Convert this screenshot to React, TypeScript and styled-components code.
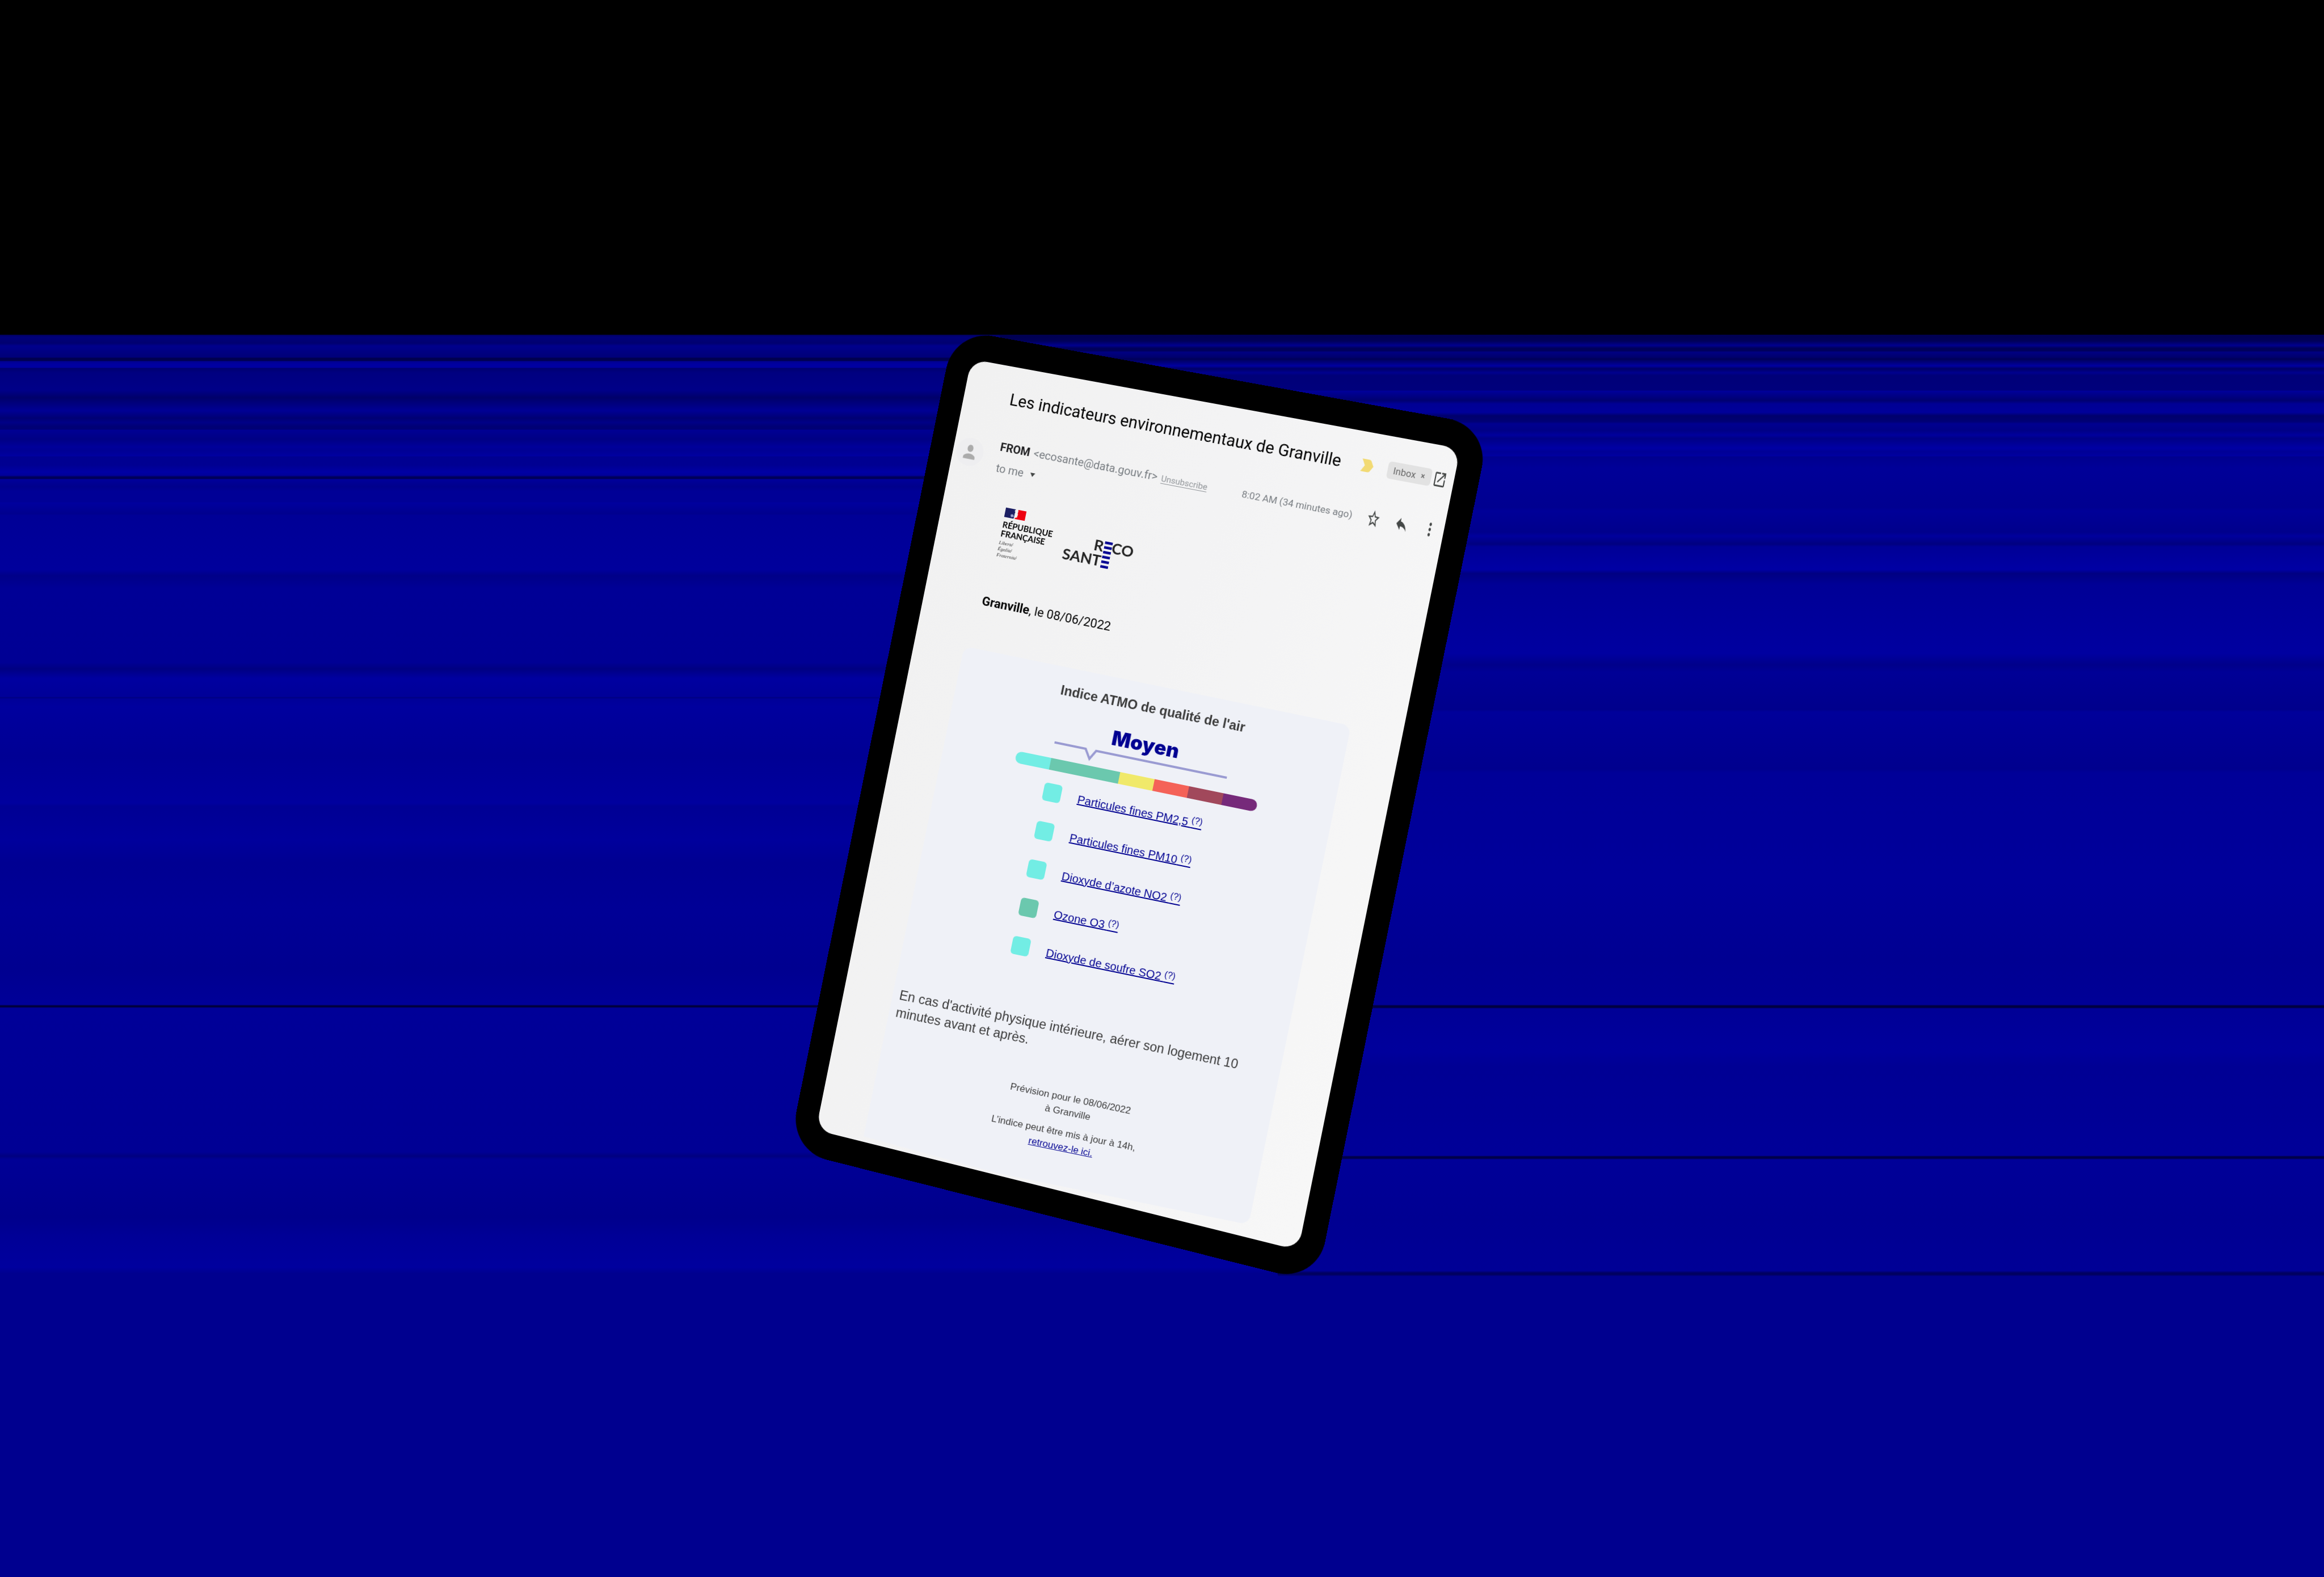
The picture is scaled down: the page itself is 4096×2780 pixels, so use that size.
import React from "react";
import styled, { createGlobalStyle } from "styled-components";

type Point = [number, number];
type Stop = [number, string];

/* Maps a w x h rectangle onto four corners (tl, tr, bl, br) with a perspective matrix. */
const quadTransform = (w: number, h: number, corners: [Point, Point, Point, Point]) => {
  const [[x0, y0], [x1, y1], [x2, y2], [x3, y3]] = corners;
  const dx1 = x1 - x3;
  const dx2 = x2 - x3;
  const dx3 = x0 - x1 + x3 - x2;
  const dy1 = y1 - y3;
  const dy2 = y2 - y3;
  const dy3 = y0 - y1 + y3 - y2;
  const det = dx1 * dy2 - dx2 * dy1;
  const g = (dx3 * dy2 - dx2 * dy3) / det;
  const k = (dx1 * dy3 - dx3 * dy1) / det;
  const m = [
    (x1 - x0 + g * x1) / w, (y1 - y0 + g * y1) / w, 0, g / w,
    (x2 - x0 + k * x2) / h, (y2 - y0 + k * y2) / h, 0, k / h,
    0, 0, 1, 0,
    x0, y0, 0, 1,
  ];
  return `matrix3d(${m.map((n) => n.toFixed(8)).join(",")})`;
};

const BAND = 1660;
const bands = (stops: Stop[]) =>
  `linear-gradient(180deg, ${stops
    .map(([y, c]) => `${c} ${((y / BAND) * 100).toFixed(3)}%`)
    .join(", ")})`;

const leftBands = bands([
  [0, "#000058"], [4, "#00007a"], [15, "#000070"], [20, "#00008c"], [40, "#000078"],
  [41, "#000050"], [46, "#000050"], [47, "#000090"], [52, "#0000a0"], [58, "#0000a0"],
  [59, "#000070"], [67, "#000080"], [98, "#000088"], [111, "#00006a"], [134, "#000094"],
  [147, "#000074"], [155, "#000086"], [162, "#000074"], [167, "#000076"], [168, "#000094"],
  [184, "#000084"], [198, "#00009a"], [204, "#000094"], [214, "#0000a0"], [215, "#000090"],
  [230, "#000092"], [242, "#0000a4"], [248, "#00009a"], [251, "#000058"], [254, "#000058"],
  [255, "#00009a"], [268, "#00008c"], [276, "#000096"], [295, "#000096"], [296, "#00009e"],
  [316, "#00008e"], [318, "#000096"], [414, "#00009c"], [425, "#000088"], [447, "#000096"],
  [578, "#000094"], [589, "#000082"], [600, "#000096"], [606, "#0000a0"], [638, "#000098"],
  [640, "#000080"], [642, "#000098"], [655, "#00009e"], [743, "#000094"], [826, "#00009e"],
  [831, "#000094"], [891, "#00009c"], [930, "#000092"], [1018, "#000096"], [1117, "#000090"],
  [1181, "#000098"], [1183, "#00003a"], [1185, "#00003a"], [1187, "#000098"], [1441, "#000094"],
  [1448, "#000080"], [1454, "#000096"], [1556, "#00008c"], [1589, "#000096"], [1644, "#00009e"],
  [1655, "#00008f"], [1660, "#00008f"],
]);

const rightBands = bands([
  [0, "#000050"], [11, "#000058"], [19, "#00008e"], [24, "#00005a"], [28, "#00005a"],
  [31, "#000082"], [40, "#00006c"], [43, "#000058"], [55, "#0000a0"], [60, "#000066"],
  [67, "#00008e"], [72, "#000078"], [98, "#00007c"], [99, "#00009a"], [116, "#000070"],
  [122, "#000094"], [137, "#00009a"], [143, "#00006c"], [153, "#000074"], [157, "#000090"],
  [169, "#000086"], [177, "#00009c"], [183, "#000086"], [200, "#0000a4"], [206, "#000096"],
  [214, "#0000a0"], [215, "#00008e"], [235, "#000098"], [305, "#000090"], [310, "#000098"],
  [348, "#00008c"], [355, "#00009c"], [369, "#000080"], [374, "#000096"], [414, "#0000a4"],
  [421, "#000082"], [441, "#000096"], [562, "#0000a0"], [582, "#00008a"], [595, "#000096"],
  [661, "#00008c"], [665, "#00009a"], [766, "#00008e"], [772, "#000098"], [964, "#00009a"],
  [1100, "#000092"], [1181, "#000096"], [1183, "#000040"], [1186, "#000040"], [1188, "#000096"],
  [1264, "#00009c"], [1290, "#000094"], [1447, "#000098"], [1449, "#000048"], [1452, "#000048"],
  [1454, "#000098"], [1560, "#000092"], [1650, "#000096"], [1654, "#000060"], [1657, "#000060"],
  [1660, "#00008f"],
]);

const SCREEN_W = 880;
const SCREEN_H = 1404;
const BEZEL_X = 42;
const BEZEL_Y = 47;
const tilt = quadTransform(SCREEN_W, SCREEN_H, [
  [104, 0],
  [966, 158],
  [-170, 1359],
  [680, 1571],
]);

const GlobalStyle = createGlobalStyle`
  * { box-sizing: border-box; }
  body { margin: 0; background: #00008f; }
  h1, h2, p, ul { margin: 0; padding: 0; }
  ul { list-style: none; }
  button { margin: 0; padding: 0; border: 0; background: none; font: inherit; color: inherit; }
`;

const Stage = styled.main`
  display: grid;
  min-height: 100vh;
  overflow: hidden;
  & > * { grid-area: 1 / 1; }
`;

const Backdrop = styled.div`
  display: grid;
  grid-template-rows: 590fr 1660fr 530fr;
  background: #00008f;
`;

const Night = styled.div`
  background: #000;
`;

const Streaks = styled.div`
  position: relative;
  background: ${leftBands};
  &::after {
    content: "";
    position: absolute;
    inset: 0;
    background: ${rightBands};
    clip-path: polygon(43% 0, 100% 0, 100% 100%, 55% 100%);
  }
`;

const Scene = styled.div`
  display: grid;
  justify-items: center;
  align-items: start;
  padding-top: 586px;
  & > * { grid-area: 1 / 1; }
`;

const Tablet = styled.div`
  padding: ${BEZEL_Y}px ${BEZEL_X}px;
  border-radius: 72px;
  background: #000;
  transform-origin: ${BEZEL_X}px ${BEZEL_Y}px;
  transform: ${tilt};
`;

const Screen = styled.div`
  width: ${SCREEN_W}px;
  height: ${SCREEN_H}px;
  padding-top: 40px;
  border-radius: 30px;
  overflow: hidden;
  background: linear-gradient(100deg, #f1f1f1, #f3f3f4 45%, #f7f7f7);
  font-family: Roboto, "Liberation Sans", sans-serif;
`;

const TitleRow = styled.header`
  display: flex;
  align-items: center;
  height: 36px;
  padding: 0 12px 0 84px;
`;

const Title = styled.h1`
  flex: 1;
  font-size: 29px;
  line-height: 36px;
  font-weight: 400;
  color: #000;
  white-space: nowrap;
`;

const Chip = styled.span`
  display: flex;
  align-items: center;
  gap: 9px;
  width: 76px;
  height: 30px;
  margin: 0 3px 0 25px;
  padding-left: 10px;
  border-radius: 6px;
  background: #e2e2e2;
  color: #666;
  font-size: 16px;
`;

const IconButton = styled.button`
  display: flex;
  align-items: center;
  justify-content: center;
  width: 24px;
  height: 36px;
  color: #444746;
`;

const SenderRow = styled.section`
  display: flex;
  align-items: center;
  gap: 28px;
  margin-top: 56px;
  padding: 0 12px 0 6px;
`;

const Avatar = styled.span`
  display: flex;
  align-items: center;
  justify-content: center;
  width: 50px;
  height: 50px;
  border-radius: 50%;
  background: #eeeef0;
`;

const Sender = styled.div`
  display: flex;
  flex-direction: column;
  gap: 12px;
  flex: 1;
  font-size: 20px;
  line-height: 24px;
  color: #777c81;
  white-space: nowrap;
`;

const SenderLine = styled.div`
  display: flex;
  align-items: baseline;
  gap: 7px;
`;

const SenderName = styled.strong`
  color: #1d1d1f;
  font-weight: 700;
`;

const Unsubscribe = styled.a`
  color: #909498;
  font-size: 15px;
  text-decoration: underline;
  text-underline-offset: 3px;
`;

const Recipient = styled.button`
  display: flex;
  align-items: center;
  gap: 12px;
  color: #777c81;
`;

const Actions = styled.div`
  display: flex;
  align-items: center;
  align-self: flex-start;
  gap: 25px;
  height: 28px;
`;

const Time = styled.time`
  color: #777c81;
  font-size: 17px;
  white-space: nowrap;
`;

const Logos = styled.div`
  display: flex;
  gap: 21px;
  margin-top: 54px;
  padding-left: 116px;
`;

const Republic = styled.div`
  display: flex;
  flex-direction: column;
  width: 92px;
`;

const RepublicName = styled.strong`
  margin-top: 5px;
  color: #000;
  font: 700 15px / 16px Lato, sans-serif;
`;

const Motto = styled.em`
  margin-top: 4px;
  color: #333;
  font: italic 400 9px / 11px "Liberation Serif", serif;
`;

const RecoLogo = styled.svg`
  margin-top: 24px;
`;

const DateLine = styled.p`
  margin-top: 66px;
  padding-left: 107px;
  color: #000;
  font-size: 22px;
  line-height: 28px;
`;

const Card = styled.article`
  display: flex;
  flex-direction: column;
  align-items: center;
  width: 696px;
  height: 898px;
  margin-top: 614px;
  padding: 27px 12px 0;
  border-radius: 16px;
  background: #eff1f7;
  color: #3a3a3a;
  font-family: "Liberation Sans", Arial, sans-serif;
  transform: translate(-98px, 0) rotate(11.6deg);
  /* the lower edge follows the rim of the screen */
  clip-path: polygon(0 0, 100% 0, 100% 100%, 35% 100%, 0 882px);
`;

const CardTitle = styled.h2`
  font-size: 23px;
  line-height: 28px;
  font-weight: 700;
`;

const Level = styled.strong`
  margin-top: 30px;
  color: #000091;
  font: 900 35px / 40px Inter, "Liberation Sans", sans-serif;
`;

const Gauge = styled.div`
  display: flex;
  flex-direction: column;
  align-items: center;
  gap: 8px;
  width: 434px;
  margin: 7px 6px 0 0;
`;

const Scale = styled.div`
  display: flex;
  width: 100%;
  height: 21px;
  border-radius: 11px;
  overflow: hidden;
`;

const Segment = styled.span<{ $color: string; $span: number }>`
  flex: ${(p) => p.$span};
  background: ${(p) => p.$color};
`;

const Pollutants = styled.ul`
  align-self: flex-start;
  margin: 4px 0 0 176px;
`;

const Pollutant = styled.li`
  display: flex;
  align-items: center;
  gap: 30px;
  height: 69px;
`;

const Swatch = styled.span<{ $color: string }>`
  width: 32px;
  height: 32px;
  border-radius: 6px;
  background: ${(p) => p.$color};
`;

const CardLink = styled.a`
  color: #000091;
  text-decoration: underline;
`;

const PollutantLink = styled(CardLink)`
  padding-top: 4px;
  font-size: 20px;
  line-height: 24px;
  sup {
    font-size: 16px;
    line-height: 0;
    vertical-align: 6px;
  }
`;

const Advice = styled.p`
  align-self: stretch;
  margin-top: 78px;
  font-size: 23px;
  line-height: 31px;
`;

const Forecast = styled.footer`
  display: flex;
  flex-direction: column;
  gap: 12px;
  margin-top: 59px;
  padding-right: 8px;
  font-size: 17px;
  line-height: 25px;
  text-align: center;
`;

const Glyph = ({ d, w = 24, h = 36, fill = "currentColor" }: { d: string; w?: number; h?: number; fill?: string }) => (
  <svg width={w} height={h} viewBox="0 0 24 24" preserveAspectRatio="none" aria-hidden="true">
    <path d={d} fill={fill} />
  </svg>
);

const icons = {
  open: "M19 19H5V5h7V3H5c-1.11 0-2 .9-2 2v14c0 1.1.89 2 2 2h14c1.1 0 2-.9 2-2v-7h-2v7zM14 3v2h3.59l-9.83 9.83 1.41 1.41L19 6.41V10h2V3h-7z",
  star: "M22 9.24l-7.19-.62L12 2 9.19 8.63 2 9.24l5.46 4.73L5.82 21 12 17.27 18.18 21l-1.63-7.03L22 9.24zM12 15.4l-3.76 2.27 1-4.28-3.32-2.88 4.38-.38L12 6.1l1.71 4.04 4.38.38-3.32 2.88 1 4.28L12 15.4z",
  reply: "M10 9V5l-7 7 7 7v-4.1c5 0 8.5 1.6 11 5.1-1-5-4-10-11-11z",
  more: "M12 8c1.1 0 2-.9 2-2s-.9-2-2-2-2 .9-2 2 .9 2 2 2zm0 2c-1.1 0-2 .9-2 2s.9 2 2 2 2-.9 2-2-.9-2-2-2zm0 6c-1.1 0-2 .9-2 2s.9 2 2 2 2-.9 2-2-.9-2-2-2z",
  person: "M12 12c2.21 0 4-1.79 4-4s-1.79-4-4-4-4 1.79-4 4 1.79 4 4 4zm0 2c-2.67 0-8 1.34-8 4v2h16v-2c0-2.66-5.33-4-8-4z",
};

const segments: { color: string; span: number }[] = [
  { color: "#72ede4", span: 1 },
  { color: "#6bc8ae", span: 2 },
  { color: "#f0e96a", span: 1 },
  { color: "#f46258", span: 1 },
  { color: "#a1485b", span: 1 },
  { color: "#762a7a", span: 1 },
];

const pollutants: { name: string; color: string }[] = [
  { name: "Particules fines PM2,5", color: "#72ede4" },
  { name: "Particules fines PM10", color: "#72ede4" },
  { name: "Dioxyde d’azote NO2", color: "#72ede4" },
  { name: "Ozone O3", color: "#6bc8ae" },
  { name: "Dioxyde de soufre SO2", color: "#72ede4" },
];

const Flag = () => (
  <svg width="38" height="17" viewBox="0 0 38 17" aria-hidden="true">
    <path d="M0 0H19q-2 1-2 3 2 2 1 4-1 1 0 3-1 3 0 5l-1 2H0z" fill="#1c1f63" />
    <path d="M11 11q3-3 5 0l1 2-3 2q-3 0-3-4z" fill="#9da3cf" />
    <path d="M23 0H38V17H19q1-3 4-3 1-2 0-3 2-2 0-4 1-4 0-7z" fill="#ee0010" />
  </svg>
);

const Mail = () => (
  <Screen>
    <TitleRow>
      <Title>Les indicateurs environnementaux de Granville</Title>
      <svg width="22" height="22" viewBox="0 0 22 22" aria-hidden="true">
        <path d="M1 0H13q3 0 4 2l5 9-5 9q-1 2-4 2H1L7 11z" fill="#f2da74" />
      </svg>
      <Chip>
        Inbox
        <svg width="7" height="8" viewBox="0 0 7 8" aria-hidden="true">
          <path d="M1 1l5 6M6 1L1 7" stroke="#666" strokeWidth="1.4" fill="none" />
        </svg>
      </Chip>
      <IconButton aria-label="Open in new window">
        <Glyph d={icons.open} h={33} />
      </IconButton>
    </TitleRow>

    <SenderRow>
      <Avatar>
        <Glyph d={icons.person} w={32} h={38} fill="#ababab" />
      </Avatar>
      <Sender>
        <SenderLine>
          <SenderName>FROM</SenderName>
          <span>&lt;ecosante@data.gouv.fr&gt;</span>
          <Unsubscribe href="#unsubscribe">Unsubscribe</Unsubscribe>
        </SenderLine>
        <Recipient>
          to me
          <svg width="9" height="7" viewBox="0 0 9 7" aria-hidden="true">
            <path d="M0 0H9L4.500 7z" fill="#444746" />
          </svg>
        </Recipient>
      </Sender>
      <Actions>
        <Time>8:02 AM (34 minutes ago)</Time>
        <IconButton aria-label="Star">
          <Glyph d={icons.star} />
        </IconButton>
        <IconButton aria-label="Reply">
          <Glyph d={icons.reply} />
        </IconButton>
        <IconButton aria-label="More">
          <Glyph d={icons.more} />
        </IconButton>
      </Actions>
    </SenderRow>

    <Logos>
      <Republic>
        <Flag />
        <RepublicName>
          RÉPUBLIQUE
          <br />
          FRANÇAISE
        </RepublicName>
        <Motto>
          Liberté
          <br />
          Égalité
          <br />
          Fraternité
        </Motto>
      </Republic>
      <RecoLogo width="132" height="50" viewBox="0 0 132 50">
        <g fill="#222" fontFamily="Lato, sans-serif" fontWeight="700" fontSize="27">
          <text x="74" y="20" textAnchor="end">R</text>
          <text x="89" y="20">CO</text>
          <text x="74" y="46" textAnchor="end">SANT</text>
        </g>
        <g fill="#000091">
          {[0, 1, 2, 3, 4, 5].map((i) => (
            <rect key={i} x="75" y={1 + i * 8.5} width="14" height="4.5" />
          ))}
        </g>
      </RecoLogo>
    </Logos>

    <DateLine>
      <strong>Granville</strong>, le 08/06/2022
    </DateLine>
  </Screen>
);

const AirQualityCard = () => (
  <Card>
    <CardTitle>Indice ATMO de qualité de l'air</CardTitle>
    <Level>Moyen</Level>
    <Gauge>
      <svg width="310" height="22" viewBox="0 0 310 22" aria-hidden="true">
        <path d="M0 2H56L66 18 75 2H310" fill="none" stroke="#9a9bd2" strokeWidth="4" />
      </svg>
      <Scale>
        {segments.map((s) => (
          <Segment key={s.color} $color={s.color} $span={s.span} />
        ))}
      </Scale>
    </Gauge>
    <Pollutants>
      {pollutants.map((p) => (
        <Pollutant key={p.name}>
          <Swatch $color={p.color} />
          <PollutantLink href="#indice">
            {p.name} <sup>(?)</sup>
          </PollutantLink>
        </Pollutant>
      ))}
    </Pollutants>
    <Advice>
      En cas d'activité physique intérieure, aérer son logement 10 minutes avant et après.
    </Advice>
    <Forecast>
      <p>
        Prévision pour le 08/06/2022
        <br />à Granville
      </p>
      <p>
        L’indice peut être mis à jour à 14h,
        <br />
        <CardLink href="#retrouvez">retrouvez-le ici.</CardLink>
      </p>
    </Forecast>
  </Card>
);

export default function App() {
  return (
    <>
      <GlobalStyle />
      <Stage>
        <Backdrop>
          <Night />
          <Streaks />
        </Backdrop>
        <Scene>
          <Tablet>
            <Mail />
          </Tablet>
          <AirQualityCard />
        </Scene>
      </Stage>
    </>
  );
}
